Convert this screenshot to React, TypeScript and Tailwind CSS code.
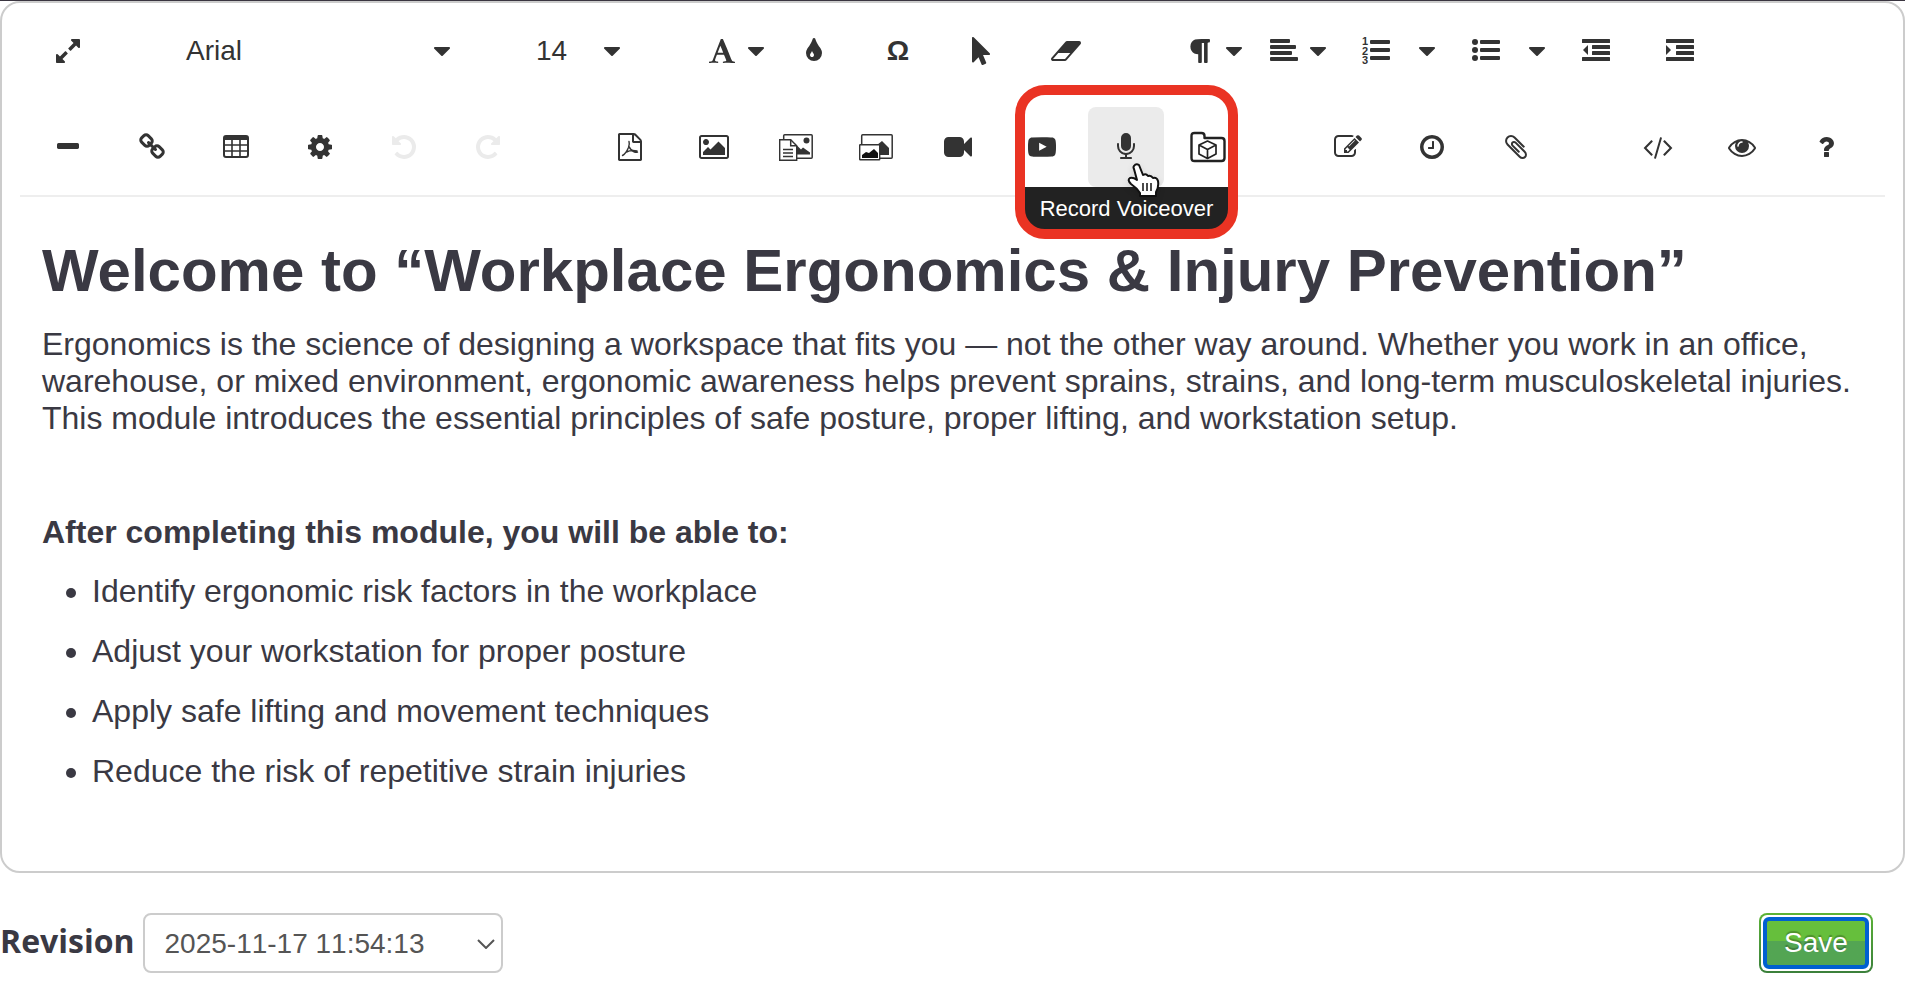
import { useState, type ReactNode } from 'react';

const PATHS = {
   expand:
      'M883 1056q0 13-10 23l-332 332 144 144q19 19 19 45t-19 45-45 19h-448q-26 0-45-19t-19-45v-448q0-26 19-45t45-19 45 19l144 144 332-332q10-10 23-10t23 10l114 114q10 10 10 23zm781-864v448q0 26-19 45t-45 19-45-19l-144-144-332 332q-10 10-23 10t-23-10l-114-114q-10-10-10-23t10-23l332-332-144-144q-19-19-19-45t19-45 45-19h448q26 0 45 19t19 45z',
   caret:
      'M1408 704q0 26-19 45l-448 448q-19 19-45 19t-45-19l-448-448q-19-19-19-45t19-45 45-19h896q26 0 45 19t19 45z',
   font: 'M789 559l-170 450q33 0 136.5 2t160.5 2q19 0 57-2-87-253-184-452zm-725 1105l2-79q23-7 56-12.5t57-10.5 49.5-14.5 44.5-29 31-50.5l237-616 280-724h128q8 14 11 21l205 480q33 78 106 257.5t114 274.5q15 34 58 144.5t72 168.5q20 45 35 57 19 15 88 29.5t84 20.5q6 38 6 57 0 5-.5 13.5t-.5 12.5q-63 0-190-8t-191-8q-76 0-215 7t-178 8q0-43 4-78l131-28q1 0 12.5-2.5t15.5-3.5 14.5-4.5 15-6.5 11-8 9-11 2.5-14q0-16-31-96.5t-72-177.5-42-100l-450-2q-26 58-76.5 195.5t-50.5 162.5q0 22 14 37.5t43.5 24.5 48.5 13.5 57 8.5 41 4q1 19 1 58 0 9-2 27-58 0-174.5-10t-174.5-10q-8 0-26.5 4t-21.5 4q-80 14-188 14z',
   tint: 'M896 1152q0-36-20-69-1-1-15.5-22.5t-25.5-38-25-44-21-50.5q-4-16-21-16t-21 16q-7 23-21 50.5t-25 44-25.5 38-15.5 22.5q-20 33-20 69 0 53 37.5 90.5t90.5 37.5 90.5-37.5 37.5-90.5zm512-128q0 212-150 362t-362 150-362-150-150-362q0-145 81-275 6-9 62.5-90.5t101-151 99.5-178 83-201.5q9-30 34-47t51-17 51.5 17 33.5 47q28 93 83 201.5t99.5 178 101 151 62.5 90.5q81 127 81 275z',
   pointer:
      'M1389 1043q31 30 14 69-17 40-59 40h-382l201 476q10 25 0 49t-34 35l-177 75q-25 10-49 0t-35-34l-191-452-312 312q-19 19-45 19-12 0-24-5-40-17-40-59v-1504q0-42 40-59 12-5 24-5 27 0 45 19z',
   eraser:
      'M960 1408l336-384h-768l-336 384h768zm1013-1077q15 34 9.5 71.5t-30.5 65.5l-896 1024q-38 44-96 44h-768q-38 0-69.5-20.5t-47.5-54.5q-15-34-9.5-71.5t30.5-65.5l896-1024q38-44 96-44h768q38 0 69.5 20.5t47.5 54.5z',
   paragraph:
      'M1534 189v73q0 29-18.5 61t-42.5 32q-50 0-54 1-26 6-32 31-3 11-3 64v1152q0 25-18 43t-43 18h-108q-25 0-43-18t-18-43v-1218h-143v1218q0 25-17.5 43t-43.5 18h-108q-26 0-43.5-18t-17.5-43v-496q-147-12-245-59-126-58-192-179-64-117-64-259 0-166 88-286 88-118 209-159 111-37 417-37h479q25 0 43 18t18 43z',
   minus: 'M1600 736v192q0 40-28 68t-68 28h-1216q-40 0-68-28t-28-68v-192q0-40 28-68t68-28h1216q40 0 68 28t28 68z',
   link: 'M1520 1216q0-40-28-68l-208-208q-28-28-68-28-42 0-72 32 3 3 19 18.5t21.5 21.5 15 19 13 25.5 3.5 27.5q0 40-28 68t-68 28q-15 0-27.5-3.5t-25.5-13-19-15-21.5-21.5-18.5-19q-33 31-33 73 0 40 28 68l206 207q27 27 68 27 40 0 68-26l147-146q28-28 28-67zm-703-705q0-40-28-68l-206-207q-28-28-68-28-39 0-68 27l-147 146q-28 28-28 67 0 40 28 68l208 208q27 27 68 27 42 0 72-31-3-3-19-18.5t-21.5-21.5-15-19-13-25.5-3.5-27.5q0-40 28-68t68-28q15 0 27.5 3.5t25.5 13 19 15 21.5 21.5 18.5 19q33-31 33-73zm895 705q0 120-85 203l-147 146q-83 83-203 83-121 0-204-85l-206-207q-83-83-83-203 0-123 88-209l-88-88q-86 88-208 88-120 0-204-84l-208-208q-84-84-84-204t85-203l147-146q83-83 203-83 121 0 204 85l206 207q83 83 83 203 0 123-88 209l88 88q86-88 208-88 120 0 204 84l208 208q84 84 84 204z',
   cog: 'M1152 896q0-106-75-181t-181-75-181 75-75 181 75 181 181 75 181-75 75-181zm512-109v222q0 12-8 23t-20 13l-185 28q-19 54-39 91 35 50 107 138 10 12 10 25t-9 23q-27 37-99 108t-94 71q-12 0-26-9l-138-108q-44 23-91 38-16 136-29 186-7 28-36 28h-222q-14 0-24.5-8.5t-11.5-21.5l-28-184q-49-16-90-37l-141 107q-10 9-25 9-14 0-25-11-126-114-165-168-7-10-7-23 0-12 8-23 15-21 51-66.5t54-70.5q-27-50-41-99l-183-27q-13-2-21-12.5t-8-23.5v-222q0-12 8-23t19-13l186-28q14-46 39-92-40-57-107-138-10-12-10-24 0-10 9-23 26-36 98.5-107.5t94.5-71.5q13 0 26 10l138 107q44-23 91-38 16-136 29-186 7-28 36-28h222q14 0 24.5 8.5t11.5 21.5l28 184q49 16 90 37l142-107q9-9 24-9 13 0 25 10 129 119 165 170 7 8 7 22 0 12-8 23-15 21-51 66.5t-54 70.5q26 50 41 98l183 28q13 2 21 12.5t8 23.5z',
   undo: 'M1664 896q0 156-61 298t-164 245-245 164-298 61q-172 0-327-72.5t-264-204.5q-7-10-6.5-22.5t8.5-20.5l137-138q10-9 25-9 16 2 23 12 73 95 179 147t225 52q104 0 198.5-40.5t163.5-109.5 109.5-163.5 40.5-198.5-40.5-198.5-109.5-163.5-163.5-109.5-198.5-40.5q-98 0-188 35.5t-160 101.5l137 138q31 30 14 69-17 40-59 40h-448q-26 0-45-19t-19-45v-448q0-42 40-59 39-17 69 14l130 129q107-101 244.5-156.5t284.5-55.5q156 0 298 61t245 164 164 245 61 298z',
   file: 'M1596 380q28 28 48 76t20 88v1152q0 40-28 68t-68 28h-1344q-40 0-68-28t-28-68v-1600q0-40 28-68t68-28h896q40 0 88 20t76 48zm-444-244v376h376q-10-29-22-41l-313-313q-12-12-41-22zm384 1528v-1024h-416q-40 0-68-28t-28-68v-416h-768v1536h1280z',
   image: 'M576 576q0 80-56 136t-136 56-136-56-56-136 56-136 136-56 136 56 56 136zm1024 384v448h-1408v-192l320-320 160 160 512-512zm96-704h-1600q-13 0-22.5 9.5t-9.5 22.5v1216q0 13 9.5 22.5t22.5 9.5h1600q13 0 22.5-9.5t9.5-22.5v-1216q0-13-9.5-22.5t-22.5-9.5zm160 32v1216q0 66-47 113t-113 47h-1600q-66 0-113-47t-47-113v-1216q0-66 47-113t113-47h1600q66 0 113 47t47 113z',
   video: 'M1792 352v1088q0 42-39 59-13 5-25 5-27 0-45-19l-403-403v166q0 119-84.5 203.5t-203.5 84.5h-704q-119 0-203.5-84.5t-84.5-203.5v-704q0-119 84.5-203.5t203.5-84.5h704q119 0 203.5 84.5t84.5 203.5v165l403-402q18-19 45-19 12 0 25 5 39 17 39 59z',
   youtube:
      'M711 1128l484-250-484-253v503zm185-862q168 0 324.5 4.5t229.5 9.5l73 4q1 0 17 1.5t23 3 23.5 4.5 28.5 8 28 13 31 19.5 29 26.5q6 6 15.5 18.5t29 58.5 26.5 101q8 64 12.5 136.5t5.5 113.5v176q1 145-18 290-7 55-25 99.5t-32 61.5l-14 17q-14 15-29 26.5t-31 19-28 12.5-28.5 8-24 4.5-23 3-16.5 1.5q-251 19-627 19-207-2-359.5-6.5t-200.5-7.5l-49-4-36-4q-36-5-54.5-10t-51-21-56.5-41q-6-6-15.5-18.5t-29-58.5-26.5-101q-8-64-12.5-136.5t-5.5-113.5v-176q-1-145 18-290 7-55 25-99.5t32-61.5l14-17q14-15 29-26.5t31-19.5 28-13 28.5-8 23.5-4.5 23-3 17-1.5q251-18 627-18z',
   mic: 'M1472 704v128q0 221-147.5 384.5t-364.5 187.5v132h256q26 0 45 19t19 45-19 45-45 19h-640q-26 0-45-19t-19-45 19-45 45-19h256v-132q-217-24-364.5-187.5t-147.5-384.5v-128q0-26 19-45t45-19 45 19 19 45v128q0 185 131.5 316.5t316.5 131.5 316.5-131.5 131.5-316.5v-128q0-26 19-45t45-19 45 19 19 45zm-256-384v512q0 132-94 226t-226 94-226-94-94-226v-512q0-132 94-226t226-94 226 94 94 226z',
   edit: 'M888 1184l116-116-152-152-116 116v56h96v96h56zm440-720q-16-16-33 1l-350 350q-17 17-1 33t33-1l350-350q17-17 1-33zm80 594v190q0 119-84.5 203.5t-203.5 84.5h-832q-119 0-203.5-84.5t-84.5-203.5v-832q0-119 84.5-203.5t203.5-84.5h832q63 0 117 25 15 7 18 23 3 17-9 29l-49 49q-14 14-32 8-23-6-45-6h-832q-66 0-113 47t-47 113v832q0 66 47 113t113 47h832q66 0 113-47t47-113v-126q0-13 9-22l64-64q15-15 35-7t20 29zm-96-738l288 288-672 672h-288v-288zm444 132l-92 92-288-288 92-92q28-28 68-28t68 28l152 152q28 28 28 68t-28 68z',
   clock: 'M1024 544v448q0 14-9 23t-23 9h-320q-14 0-23-9t-9-23v-64q0-14 9-23t23-9h224v-352q0-14 9-23t23-9h64q14 0 23 9t9 23zm416 352q0-148-73-273t-198-198-273-73-273 73-198 198-73 273 73 273 198 198 273 73 273-73 198-198 73-273zm224 0q0 209-103 385.5t-279.5 279.5-385.5 103-385.5-103-279.5-279.5-103-385.5 103-385.5 279.5-279.5 385.5-103 385.5 103 279.5 279.5 103 385.5z',
   clip: 'M1596 1385q0 117-79 196t-196 79q-135 0-235-100l-777-776q-113-115-113-271 0-159 110-270t269-111q158 0 273 113l605 606q10 10 10 22 0 16-30.5 46.5t-46.5 30.5q-13 0-23-10l-606-607q-79-77-181-77-106 0-179 75t-73 181q0 105 76 181l776 777q63 63 145 63 64 0 106-42t42-106q0-82-63-145l-581-581q-26-24-60-24-29 0-48 19t-19 48q0 32 25 59l410 410q10 10 10 22 0 16-31 47t-47 31q-12 0-22-10l-410-410q-63-61-63-149 0-82 57-139t139-57q88 0 149 63l581 581q100 98 100 235z',
   code: 'M553 1399l-50 50q-10 10-23 10t-23-10l-466-466q-10-10-10-23t10-23l466-466q10-10 23-10t23 10l50 50q10 10 10 23t-10 23l-393 393 393 393q10 10 10 23t-10 23zm591-1067l-373 1291q-4 13-15.5 19.5t-23.5 2.5l-62-17q-13-4-19.5-15.5t-2.5-24.5l373-1291q4-13 15.5-19.5t23.5-2.5l62 17q13 4 19.5 15.5t2.5 24.5zm657 651l-466 466q-10 10-23 10t-23-10l-50-50q-10-10-10-23t10-23l393-393-393-393q-10-10-10-23t10-23l50-50q10-10 23-10t23 10l466 466q10 10 10 23t-10 23z',
   eye: 'M1664 960q-152-236-381-353 61 104 61 225 0 185-131.5 316.5t-316.5 131.5-316.5-131.5-131.5-316.5q0-121 61-225-229 117-381 353 133 205 333.5 326.5t434.5 121.5 434.5-121.5 333.5-326.5zm-720-384q0-20-14-34t-34-14q-125 0-214.5 89.5t-89.5 214.5q0 20 14 34t34 14 34-14 14-34q0-86 61-147t147-61q20 0 34-14t14-34zm848 384q0 34-20 69-140 230-376.5 368.5t-499.5 138.5-499.5-139-376.5-368q-20-35-20-69t20-69q140-229 376.5-368t499.5-139 499.5 139 376.5 368q20 35 20 69z',
   help: 'M1088 1256v240q0 16-12 28t-28 12h-240q-16 0-28-12t-12-28v-240q0-16 12-28t28-12h240q16 0 28 12t12 28zm316-600q0 54-15.5 101t-35 76.5-55 59.5-57.5 43.5-61 35.5q-41 23-68.5 65t-27.5 67q0 17-12 32.5t-28 15.5h-240q-15 0-25.5-18.5t-10.5-37.5v-45q0-83 65-156.5t143-108.5q59-27 84-56t25-76q0-42-46.5-74t-107.5-32q-65 0-108 29-35 25-107 115-13 16-31 16-12 0-25-8l-164-125q-13-10-15.5-25t5.5-28q160-266 464-266 80 0 161 31t146 83 106 127.5 41 158.5z',
};

const Icon = ({ name }: { name: keyof typeof PATHS }) => (
   <svg viewBox="0 0 1792 1792" className="size-7 shrink-0 overflow-visible" fill="currentColor">
      <path d={PATHS[name]} />
   </svg>
);

const Caret = () => <Icon name="caret" />;

const AlignLeft = () => (
   <svg viewBox="0 0 28 28" className="size-7 shrink-0" fill="currentColor">
      <rect x="0" y="2" width="20" height="4" rx="1" />
      <rect x="0" y="8" width="26" height="4" rx="1" />
      <rect x="0" y="14" width="22" height="4" rx="1" />
      <rect x="0" y="20" width="28" height="4" rx="1" />
   </svg>
);

const ListOl = () => (
   <svg viewBox="0 0 28 28" className="size-7 overflow-visible" fill="currentColor">
      <g className="font-['Liberation_Sans',Arial,sans-serif] text-[11px] font-bold">
         <text x="0" y="8">
            1
         </text>
         <text x="0" y="18">
            2
         </text>
         <text x="0" y="27">
            3
         </text>
      </g>
      <rect x="8" y="3" width="20" height="4" rx="1" />
      <rect x="8" y="11" width="20" height="4" rx="1" />
      <rect x="8" y="19" width="20" height="4" rx="1" />
   </svg>
);

const ListUl = () => (
   <svg viewBox="0 0 28 28" className="size-7" fill="currentColor">
      <circle cx="3" cy="5" r="3" />
      <circle cx="3" cy="13" r="3" />
      <circle cx="3" cy="21" r="3" />
      <rect x="8" y="3" width="20" height="4" rx="1" />
      <rect x="8" y="11" width="20" height="4" rx="1" />
      <rect x="8" y="19" width="20" height="4" rx="1" />
   </svg>
);

const Dent = ({ arrow }: { arrow: string }) => (
   <svg viewBox="0 0 28 28" className="size-7" fill="currentColor">
      <rect x="0" y="2" width="28" height="4" rx="0.5" />
      <rect x="10" y="8" width="18" height="4" rx="0.5" />
      <rect x="10" y="14" width="18" height="4" rx="0.5" />
      <rect x="0" y="20" width="28" height="4" rx="0.5" />
      <path d={arrow} />
   </svg>
);

const TableIcon = () => (
   <svg viewBox="0 0 28 28" className="size-7">
      <rect x="2" y="3" width="24" height="21" rx="2" fill="none" stroke="currentColor" strokeWidth="2" />
      <path d="M2 3h24v4H2z" fill="currentColor" />
      <path d="M2 12h24M2 18h24M10 6v18M18 6v18" stroke="currentColor" strokeWidth="1.6" />
   </svg>
);

const PdfIcon = () => (
   <svg viewBox="0 0 28 28" className="size-7">
      <path transform="scale(0.015625)" d={PATHS.file} fill="currentColor" />
      <path
         d="M6.500 22.500c2-1 4.500-4.500 6-8 1-2.500 1-4.500.5-6M13 13.500c1 2.500 3 4.500 5.500 5.500 1 .4 2 .5 3 .2M10.500 19c3-1.500 6.500-1.800 10.500-1"
         fill="none"
         stroke="currentColor"
         strokeWidth="1.4"
         strokeLinecap="round"
      />
   </svg>
);

const ImageIcon = () => (
   <svg viewBox="-64 0 1920 1792" className="h-7 w-[30px]" fill="currentColor">
      <path d={PATHS.image} />
   </svg>
);

const DocImageIcon = () => (
   <svg viewBox="0 0 34 28" className="h-7 w-[34px]">
      <rect x="4.700" y="1.700" width="28.500" height="23.500" rx="1" fill="#fff" stroke="#333" strokeWidth="1.500" />
      <circle cx="27.500" cy="7.500" r="3" fill="#333" />
      <path d="M16 21.500v-11l6 6 2-2 7 5v2z" fill="#333" />
      <path d="M.7 6.700h11l6 6v14.500H.7z" fill="#fff" stroke="#333" strokeWidth="1.400" />
      <path d="M11.700 6.700v6h6M4 16.500h10M4 20h10M4 23.500h10" fill="none" stroke="#333" strokeWidth="1.500" />
   </svg>
);

const GalleryIcon = () => (
   <svg viewBox="0 0 34 28" className="h-7 w-[34px]">
      <rect x="2.700" y="1.700" width="30.500" height="23.500" rx="1" fill="#fff" stroke="#333" strokeWidth="1.500" />
      <path d="M18 12l5-4 7 7v7H18z" fill="#333" />
      <rect x=".7" y="11.700" width="20" height="15" rx="0.500" fill="#fff" stroke="#333" strokeWidth="1.400" />
      <path d="M3 25v-3l4-3 3 1 5-4 4 4v5z" fill="#111" />
   </svg>
);

const FolderIcon = () => (
   <svg viewBox="0 0 36 32" className="h-8 w-9" fill="none" stroke="#222" strokeLinejoin="round">
      <path d="M1.500 27V5q0-3 3-3h7q3 0 3 3v2h17q3 0 3 3v17q0 3-3 3h-27q-3 0-3-3z" strokeWidth="2.400" />
      <path d="M17.500 10l8.500 4v9l-8.500 4.500L9 23v-9zM10 14.500l7.500 4 7.500-4M17.500 18.500v8.500" strokeWidth="1.700" />
   </svg>
);

const HandCursor = () => (
   <svg
      viewBox="0 0 32 34"
      className="pointer-events-none absolute top-14 left-10 z-30 h-[34px] w-8 overflow-visible drop-shadow-md"
      stroke="#111"
      strokeWidth="2"
      strokeLinejoin="round"
   >
      <path
         d="M6 3q2-3 5-1l4 10q3-2 5 1 3-1 5 2 4-1 5 3 1 6-2 11v4H12v-3q-3-5-9-9-4-4-1-6 3-1 7 2L6 6q-1-2 0-3z"
         fill="#fff"
      />
      <path d="M15 20v8M19 20v8M23 20v8" strokeWidth="1.500" />
   </svg>
);

type ToolProps = { label: string; children: ReactNode; className?: string; disabled?: boolean };

const Tool = ({ label, children, className = 'w-19', disabled }: ToolProps) => (
   <button
      type="button"
      aria-label={label}
      disabled={disabled}
      className={`flex h-20 shrink-0 items-center justify-center rounded-lg disabled:text-[#ebebeb] ${className}`}
   >
      {children}
   </button>
);

const Group = ({ children }: { children: ReactNode }) => <div className="flex gap-2">{children}</div>;

const objectives = [
   'Identify ergonomic risk factors in the workplace',
   'Adjust your workstation for proper posture',
   'Apply safe lifting and movement techniques',
   'Reduce the risk of repetitive strain injuries',
];

export default function App() {
   const [revision, setRevision] = useState<string>('2025-11-17 11:54:13');

   return (
      <div className="min-h-screen border-t border-[#3a3540] bg-white font-['Liberation_Sans',Arial,sans-serif] text-[#3a3943]">
         <div className="rounded-[20px] border-2 border-[#ccc]">
            {/* Toolbar */}
            <div className="mx-[18px] flex flex-col gap-4 border-b-2 border-[#eee] px-[10px] py-2 text-[#333]">
               <div className="flex gap-[66px]">
                  <Tool label="Fullscreen">
                     <Icon name="expand" />
                  </Tool>
                  <Tool label="Font family" className="w-[284px] pl-[14px]">
                     <span className="flex-1 text-left text-[28px]">Arial</span>
                     <Caret />
                  </Tool>
                  <Tool label="Font size" className="w-26 pl-[14px]">
                     <span className="flex-1 text-left text-[28px]">14</span>
                     <Caret />
                  </Tool>
                  <Group>
                     <Tool label="Text color" className="w-19 gap-[6px] pl-[18px]">
                        <Icon name="font" />
                        <Caret />
                     </Tool>
                     <Tool label="Background color">
                        <Icon name="tint" />
                     </Tool>
                     <Tool label="Special characters">
                        <span className="text-[28px] font-bold">Ω</span>
                     </Tool>
                     <Tool label="Select">
                        <Icon name="pointer" />
                     </Tool>
                     <Tool label="Clear formatting">
                        <svg viewBox="64 0 1920 1792" className="h-7 w-[30px]" fill="currentColor">
                           <path d={PATHS.eraser} />
                        </svg>
                     </Tool>
                  </Group>
                  <Group>
                     <Tool label="Paragraph format" className="w-19 gap-[6px] pl-[18px]">
                        <Icon name="paragraph" />
                        <Caret />
                     </Tool>
                     <Tool label="Align" className="w-19 gap-[6px] pl-[18px]">
                        <AlignLeft />
                        <Caret />
                     </Tool>
                     <div className="flex">
                        <Tool label="Ordered list">
                           <ListOl />
                        </Tool>
                        <Tool label="Ordered list options" className="w-[26px]">
                           <Caret />
                        </Tool>
                     </div>
                     <div className="flex">
                        <Tool label="Unordered list">
                           <ListUl />
                        </Tool>
                        <Tool label="Unordered list options" className="w-[26px]">
                           <Caret />
                        </Tool>
                     </div>
                     <Tool label="Decrease indent">
                        <Dent arrow="M6 8v10l-5-5z" />
                     </Tool>
                     <Tool label="Increase indent">
                        <Dent arrow="M0 8v10l5-5z" />
                     </Tool>
                  </Group>
               </div>

               <div className="flex gap-[66px]">
                  <Group>
                     <Tool label="Horizontal line">
                        <Icon name="minus" />
                     </Tool>
                     <Tool label="Insert link">
                        <Icon name="link" />
                     </Tool>
                     <Tool label="Insert table">
                        <TableIcon />
                     </Tool>
                     <Tool label="Settings">
                        <Icon name="cog" />
                     </Tool>
                     <Tool label="Undo" disabled>
                        <Icon name="undo" />
                     </Tool>
                     <Tool label="Redo" disabled className="w-19 -scale-x-100">
                        <Icon name="undo" />
                     </Tool>
                  </Group>
                  <Group>
                     <Tool label="Insert PDF">
                        <PdfIcon />
                     </Tool>
                     <Tool label="Insert image">
                        <ImageIcon />
                     </Tool>
                     <Tool label="Image with text" className="w-18">
                        <DocImageIcon />
                     </Tool>
                     <Tool label="Image gallery" className="w-18">
                        <GalleryIcon />
                     </Tool>
                     <Tool label="Insert video">
                        <Icon name="video" />
                     </Tool>
                     <Tool label="Insert YouTube video">
                        <Icon name="youtube" />
                     </Tool>
                     <div className="relative">
                        <Tool label="Record voiceover" className="w-19 bg-[#ebebeb]">
                           <Icon name="mic" />
                        </Tool>
                        {/* Tooltip, highlight frame and cursor over the active button */}
                        <div
                           role="tooltip"
                           className="absolute top-20 -left-16 z-10 flex h-[44px] w-[205px] items-center justify-center rounded-b-[20px] bg-[#222] pb-[2px] text-[22px] whitespace-nowrap text-white"
                        >
                           Record Voiceover
                        </div>
                        <div className="pointer-events-none absolute -top-[22px] -left-[73px] z-20 h-[154px] w-[223px] rounded-[30px] border-10 border-[#ea3323]" />
                        <HandCursor />
                     </div>
                     <Tool label="Insert 3D object" className="w-18">
                        <FolderIcon />
                     </Tool>
                  </Group>
                  <Group>
                     <Tool label="Edit">
                        <Icon name="edit" />
                     </Tool>
                     <Tool label="History">
                        <Icon name="clock" />
                     </Tool>
                     <Tool label="Attach file">
                        <Icon name="clip" />
                     </Tool>
                  </Group>
                  <Group>
                     <Tool label="Code view">
                        <Icon name="code" />
                     </Tool>
                     <Tool label="Preview">
                        <Icon name="eye" />
                     </Tool>
                     <Tool label="Help">
                        <Icon name="help" />
                     </Tool>
                  </Group>
               </div>
            </div>

            {/* Content */}
            <div className="px-10 pt-[39px] pb-[81px] text-[32px] leading-[37px]">
               <h1 className="text-[60px] leading-[70px] font-bold">
                  Welcome to “Workplace Ergonomics &amp; Injury Prevention”
               </h1>
               <p className="mt-5">
                  Ergonomics is the science of designing a workspace that fits you — not the other way around. Whether
                  you work in an office, warehouse, or mixed environment, ergonomic awareness helps prevent sprains,
                  strains, and long-term musculoskeletal injuries. This module introduces the essential principles of
                  safe posture, proper lifting, and workstation setup.
               </p>
               <p className="mt-[77px] font-bold">After completing this module, you will be able to:</p>
               <ul className="mt-[22px] flex list-disc flex-col gap-[23px] pl-[50px]">
                  {objectives.map((item) => (
                     <li key={item}>{item}</li>
                  ))}
               </ul>
            </div>
         </div>

         {/* Revision bar */}
         <div className="mt-10 flex items-center pr-8">
            <label htmlFor="revision" className="mr-2 pb-1 font-['Open_Sans',sans-serif] text-[32px] font-bold">
               Revision
            </label>
            <div className="relative">
               <select
                  id="revision"
                  value={revision}
                  onChange={(e) => setRevision(e.target.value)}
                  className="h-15 w-[360px] appearance-none rounded-lg border-2 border-[#ccc] bg-white px-5 pt-[2px] text-[28px] text-[#555] [font-kerning:none]"
               >
                  <option>2025-11-17 11:54:13</option>
               </select>
               <svg
                  viewBox="0 0 18 10"
                  className="pointer-events-none absolute top-[26px] right-2 h-[10px] w-[18px]"
                  fill="none"
                  stroke="#555"
                  strokeWidth="2"
               >
                  <path d="M1 1l8 8 8-8" />
               </svg>
            </div>
            <button
               type="button"
               className="ml-auto h-15 w-[114px] rounded-lg bg-linear-to-b from-[#5cb335] to-[#3b803b] p-[2px]"
            >
               <span className="flex h-full rounded-md bg-white p-[2px]">
                  <span className="flex flex-1 items-center justify-center rounded-md border-4 border-[#0060d0] bg-linear-to-b from-[#66bf3c] from-45% to-[#53a553] to-45% text-[28px] text-white text-shadow-[0_-2px_1px_rgb(0_0_0/0.25)]">
                     Save
                  </span>
               </span>
            </button>
         </div>
      </div>
   );
}
